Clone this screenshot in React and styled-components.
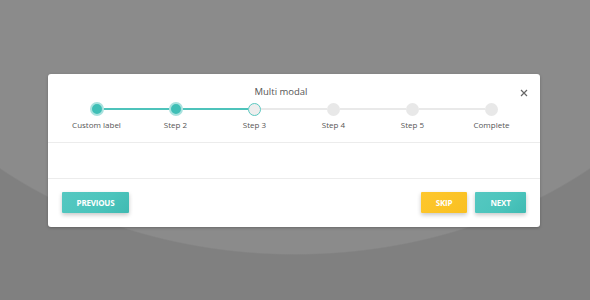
import React from 'react';
import styled, { createGlobalStyle } from 'styled-components';

const GlobalStyle = createGlobalStyle`
  html, body {
    margin: 0;
    padding: 0;
  }
  body {
    font-family: "Open Sans", "Noto Sans", "Liberation Sans", sans-serif;
  }
`;

// Backdrop with the soft arc behind the modal
const Backdrop = styled.div`
  width: 590px;
  height: 300px;
  box-sizing: border-box;
  padding: 74px 0 0 48px;
  background: radial-gradient(
    ellipse 450px 350px at 295px -95px,
    #8b8b8b 99.6%,
    #808080 100%
  );
`;

const Modal = styled.div`
  width: 492px;
  background: #fff;
  border-radius: 3px;
  box-shadow: 0 1px 3px rgba(0, 0, 0, 0.25);
  display: flex;
  flex-direction: column;
`;

const Header = styled.div`
  display: flex;
  align-items: center;
  padding: 10px 6px 0 0;
`;

const Title = styled.div`
  flex: 1;
  text-align: center;
  font-size: 9.5px;
  line-height: 14px;
  color: #555;
`;

const Close = styled.button`
  width: 20px;
  height: 14px;
  padding: 0;
  border: none;
  background: none;
  display: flex;
  align-items: center;
  justify-content: center;
  margin-top: 2px;
  cursor: pointer;
`;

const Stepper = styled.div`
  display: grid;
  grid-template-columns: repeat(6, 1fr);
  padding: 2px 9px 11px;
  border-bottom: 1px solid #ececec;
`;

const Step = styled.div`
  display: flex;
  flex-direction: column;
  align-items: center;
`;

const Track = styled.div`
  width: 100%;
  height: 14px;
  display: flex;
  align-items: center;
`;

const Line = styled.div`
  flex: 1;
  height: 2px;
  background: ${p => (p.$off ? 'transparent' : p.$done ? '#4ec3bb' : '#e9e9e9')};
`;

const Dot = styled.div`
  flex: none;
  box-sizing: border-box;
  border-radius: 50%;
  width: ${p => (p.$state === 'done' ? 14 : 13)}px;
  height: ${p => (p.$state === 'done' ? 14 : 13)}px;
  background: ${p =>
    p.$state === 'done' ? '#3fbfb6' : p.$state === 'current' ? '#eeeeee' : '#e8e8e8'};
  border: ${p =>
    p.$state === 'done'
      ? '2px solid #a9e2de'
      : p.$state === 'current'
      ? '1.5px solid #5ac8c0'
      : 'none'};
`;

const Label = styled.div`
  margin-top: 3px;
  font-size: 8px;
  line-height: 12px;
  color: #555;
  white-space: nowrap;
`;

const Body = styled.div`
  height: 35px;
  border-bottom: 1px solid #ececec;
`;

const Footer = styled.div`
  display: flex;
  align-items: center;
  gap: 8px;
  padding: 13px 14px 14px;
`;

const Spacer = styled.div`
  flex: 1;
`;

const Button = styled.button`
  height: 21px;
  width: ${p => p.$w}px;
  border: none;
  border-radius: 1px;
  padding: 0;
  font-family: inherit;
  font-size: 8px;
  font-weight: 700;
  color: #fff;
  letter-spacing: -0.2px;
  background: ${p =>
    p.$kind === 'warn'
      ? 'linear-gradient(135deg, #fec72d 0%, #f9c021 100%)'
      : 'linear-gradient(135deg, #55c8c1 0%, #4bc4bc 60%, #3fbab2 100%)'};
  box-shadow: 0 2px 4px rgba(0, 0, 0, 0.22);
  cursor: pointer;
`;

const steps = ['Custom label', 'Step 2', 'Step 3', 'Step 4', 'Step 5', 'Complete'];
const current = 2;

const App = () => (
  <>
    <GlobalStyle />
    <Backdrop>
      <Modal>
        <Header>
          <Title>Multi modal</Title>
          <Close aria-label="close">
            <svg width="8" height="8" viewBox="0 0 8 8">
              <path d="M1 1 L7 7 M7 1 L1 7" stroke="#666" strokeWidth="1.2" />
            </svg>
          </Close>
        </Header>
        <Stepper>
          {steps.map((label, i) => {
            const state = i < current ? 'done' : i === current ? 'current' : 'todo';
            return (
              <Step key={label}>
                <Track>
                  <Line $off={i === 0} $done={i <= current} />
                  <Dot $state={state} />
                  <Line $off={i === steps.length - 1} $done={i < current} />
                </Track>
                <Label>{label}</Label>
              </Step>
            );
          })}
        </Stepper>
        <Body />
        <Footer>
          <Button $w={67}>PREVIOUS</Button>
          <Spacer />
          <Button $kind="warn" $w={46}>SKIP</Button>
          <Button $w={51}>NEXT</Button>
        </Footer>
      </Modal>
    </Backdrop>
  </>
);

export default App;
